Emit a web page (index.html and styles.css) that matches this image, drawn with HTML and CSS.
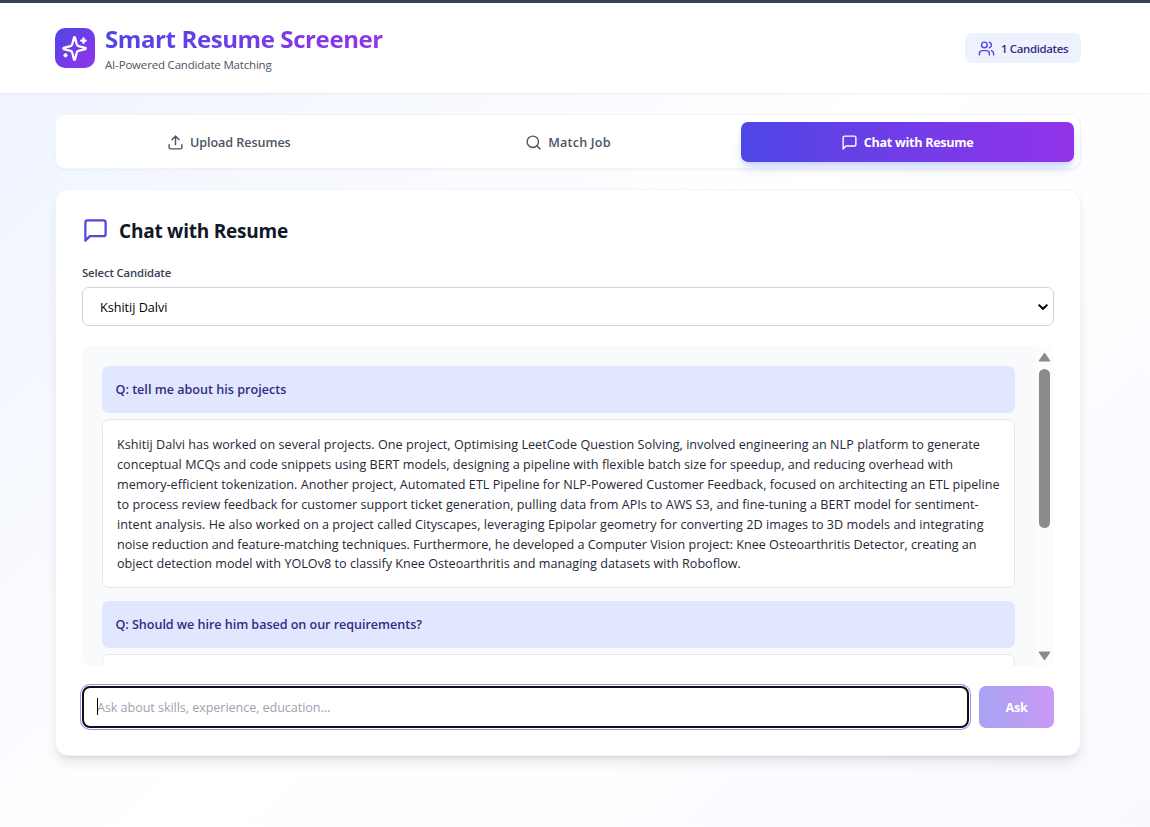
FILE: index.html
```html
<!DOCTYPE html>
<html lang="en">
<head>
<meta charset="utf-8">
<title>Smart Resume Screener</title>
<link rel="stylesheet" href="styles.css">
</head>
<body>
<header class="header">
  <div class="brand">
    <div class="logo">
      <svg class="icon" width="27" height="27" viewBox="0 0 24 24"><path d="M9.937 15.5A2 2 0 0 0 8.5 14.063l-6.135-1.582a.5.5 0 0 1 0-.962L8.5 9.936A2 2 0 0 0 9.937 8.5l1.582-6.135a.5.5 0 0 1 .963 0L14.063 8.5A2 2 0 0 0 15.5 9.937l6.135 1.581a.5.5 0 0 1 0 .964L15.5 14.063a2 2 0 0 0-1.437 1.437l-1.582 6.135a.5.5 0 0 1-.963 0z"/><path d="M20 3v4M22 5h-4M4 17v2M5 18H3"/></svg>
    </div>
    <div class="brand-text">
      <h1 class="title"><span class="title-fill">Smart Resume Screener</span></h1>
      <p class="subtitle">AI-Powered Candidate Matching</p>
    </div>
  </div>
  <div class="count">
    <svg class="icon count-icon" width="17" height="17" viewBox="0 0 24 24"><path d="M16 21v-2a4 4 0 0 0-4-4H6a4 4 0 0 0-4 4v2"/><circle cx="9" cy="7" r="4"/><path d="M22 21v-2a4 4 0 0 0-3-3.87M16 3.13a4 4 0 0 1 0 7.75"/></svg>
    <span class="count-text">1 Candidates</span>
  </div>
</header>
<main class="main">
  <nav class="tabs">
    <button class="tab"><svg class="icon" width="17" height="17" viewBox="0 0 24 24"><path d="M21 15v4a2 2 0 0 1-2 2H5a2 2 0 0 1-2-2v-4M17 8l-5-5-5 5M12 3v12"/></svg><span class="tab-upload">Upload Resumes</span></button>
    <button class="tab"><svg class="icon" width="17" height="17" viewBox="0 0 24 24"><circle cx="11" cy="11" r="8"/><path d="m21 21-4.3-4.3"/></svg><span class="tab-match">Match Job</span></button>
    <button class="tab tab-active"><svg class="icon" width="17" height="17" viewBox="0 0 24 24"><path d="M21 15a2 2 0 0 1-2 2H7l-4 4V5a2 2 0 0 1 2-2h14a2 2 0 0 1 2 2z"/></svg><span class="tab-chat">Chat with Resume</span></button>
  </nav>
  <section class="card">
    <h2 class="heading"><svg class="icon heading-icon" width="27" height="27" viewBox="0 0 24 24"><path d="M21 15a2 2 0 0 1-2 2H7l-4 4V5a2 2 0 0 1 2-2h14a2 2 0 0 1 2 2z"/></svg><span class="heading-text">Chat with Resume</span></h2>
    <div class="label"><span class="label-text">Select Candidate</span></div>
    <div class="select"><span class="select-text">Kshitij Dalvi</span><svg class="chevron" width="12" height="8" viewBox="0 0 12 8"><path d="M1.6 1.6 6 5.8l4.4-4.2"/></svg></div>
    <div class="chat">
      <div class="messages">
        <div class="question"><span class="q1">Q: tell me about his projects</span></div>
        <div class="answer">
          <span class="line l1">Kshitij Dalvi has worked on several projects. One project, Optimising LeetCode Question Solving, involved engineering an NLP platform to generate</span>
          <span class="line l2">conceptual MCQs and code snippets using BERT models, designing a pipeline with flexible batch size for speedup, and reducing overhead with</span>
          <span class="line l3">memory-efficient tokenization. Another project, Automated ETL Pipeline for NLP-Powered Customer Feedback, focused on architecting an ETL pipeline</span>
          <span class="line l4">to process review feedback for customer support ticket generation, pulling data from APIs to AWS S3, and fine-tuning a BERT model for sentiment-</span>
          <span class="line l5">intent analysis. He also worked on a project called Cityscapes, leveraging Epipolar geometry for converting 2D images to 3D models and integrating</span>
          <span class="line l6">noise reduction and feature-matching techniques. Furthermore, he developed a Computer Vision project: Knee Osteoarthritis Detector, creating an</span>
          <span class="line l7">object detection model with YOLOv8 to classify Knee Osteoarthritis and managing datasets with Roboflow.</span>
        </div>
        <div class="question question-next"><span class="q2">Q: Should we hire him based on our requirements?</span></div>
        <div class="answer"></div>
      </div>
      <div class="scrollbar">
        <svg width="13" height="10" viewBox="0 0 13 10"><path d="M6.5 1 12 9H1z"/></svg>
        <div class="thumb"></div>
        <svg width="13" height="10" viewBox="0 0 13 10"><path d="M1 1h11L6.5 9z"/></svg>
      </div>
    </div>
    <div class="ask-row">
      <div class="field"><span class="caret"></span><span class="placeholder">Ask about skills, experience, education...</span></div>
      <button class="ask"><span class="ask-text">Ask</span></button>
    </div>
  </section>
</main>
</body>
</html>
```
FILE: styles.css
```css
* { box-sizing: border-box; }
body {
  margin: 0;
  height: 827px;
  overflow: hidden;
  border-top: 3px solid #374151;
  font-family: "Open Sans", "Noto Sans", sans-serif;
  font-size: 12.6px;
  background: linear-gradient(135deg, #eef3ff 0%, #ffffff 50%, #fbf8ff 100%);
}
h1, h2, p { margin: 0; }
button { border: 0; background: none; font: inherit; padding: 0; }
span { white-space: nowrap; }
.icon { fill: none; stroke: currentColor; stroke-width: 2; stroke-linecap: round; stroke-linejoin: round; flex: none; }

.header {
  height: 90px;
  padding: 0 69px 0 55px;
  display: flex;
  align-items: center;
  justify-content: space-between;
  background: #fff;
  box-shadow: 0 1px 2px rgba(0, 0, 0, .07);
}
.brand { display: flex; align-items: center; gap: 10px; }
.logo {
  width: 40px; height: 40px;
  display: grid; place-items: center;
  padding-right: 1px;
  color: #fff;
  border-radius: 10px;
  background: linear-gradient(135deg, #4f46e5, #9333ea);
}
.title { font-size: 24px; line-height: 33px; font-weight: 700; letter-spacing: -.4px; }
.title-fill {
  display: inline-block;
  color: transparent;
  background: linear-gradient(90deg, #4f46e5, #9333ea);
  background-clip: text;
  -webkit-background-clip: text;
}
.subtitle { padding-top: 1px; font-size: 11.5px; line-height: 18px; color: #4b5563; letter-spacing: -.18px; }
.count {
  width: 116px; height: 30px;
  display: flex; align-items: center; gap: 6px;
  padding-left: 13px;
  border-radius: 7px;
  background: #eef2ff;
  color: #312e81;
  font-size: 11.4px; font-weight: 600;
  letter-spacing: -.33px;
}
.count-icon { color: #4f46e5; }

.main { padding: 21px 69px 0 55px; }
.tabs {
  height: 55px;
  display: grid;
  grid-template-columns: repeat(3, 1fr);
  gap: 7px;
  padding: 7px 6px 6px;
  border-radius: 10px;
  background: #fff;
  border: 1px solid #f3f4f6;
  box-shadow: 0 1px 2px rgba(0, 0, 0, .05);
}
.tab {
  display: flex; align-items: center; justify-content: center; gap: 6px;
  color: #4b5563;
  font-weight: 600;
  border-radius: 7px;
}
.tab:first-child { padding-left: 1px; }
.tab-upload { letter-spacing: -.07px; }
.tab-match { letter-spacing: .2px; }
.tab-active {
  color: #fff;
  background: linear-gradient(90deg, #4f46e5, #9333ea);
  box-shadow: 0 8px 12px -3px #c7d2fe, 0 3px 5px -3px #c7d2fe;
}
.tab-chat { font-weight: 700; letter-spacing: -.3px; }
.tab-active { padding-right: 1px; }

.card {
  height: 567px;
  margin-top: 20px;
  padding: 27px 26px 0;
  border-radius: 13px;
  background: #fff;
  border: 1px solid #f3f4f6;
  box-shadow: 0 8px 12px -2px rgba(0, 0, 0, .1), 0 3px 5px -3px rgba(0, 0, 0, .1);
}
.heading { display: flex; align-items: center; gap: 10px; height: 27px; font-size: 19px; color: #111827; font-weight: 700; letter-spacing: -.23px; }
.heading-icon { color: #4f46e5; }
.label { height: 17px; margin-top: 20px; line-height: 17px; font-size: 11.3px; font-weight: 600; letter-spacing: -.12px; color: #374151; }
.select {
  height: 39px;
  margin-top: 6px;
  padding: 0 4px 0 17px;
  display: flex; align-items: center; justify-content: space-between;
  border: 1px solid #d1d5db;
  border-radius: 7px;
  color: #000;
}
.select-text { padding-top: 2px; }
.chevron { fill: none; stroke: #000; stroke-width: 2; }

.chat {
  height: 320px;
  margin-top: 20px;
  display: flex;
  overflow: hidden;
  border-radius: 10px 0 0 10px;
  background: #f9fafb;
}
.messages { flex: 1; padding: 20px; }
.question {
  height: 47px;
  display: flex; align-items: center;
  padding-left: 13.5px;
  border-radius: 7px;
  background: #e0e7ff;
  color: #312e81;
  font-weight: 600;
}
.q2 { letter-spacing: -.05px; }
.answer {
  height: 169px;
  margin-top: 6px;
  padding: 15px 14px;
  border: 1px solid #e5e7eb;
  border-radius: 7px;
  background: #fff;
  color: #1f2937;
}
.question-next { margin-top: 13px; }
.line { display: block; line-height: 19.9px; }
.l1 { letter-spacing: .035px; }
.l2 { letter-spacing: .03px; }
.l3 { letter-spacing: .02px; }
.l4 { letter-spacing: .042px; }
.l5 { letter-spacing: .048px; }
.l6 { letter-spacing: -.007px; }
.l7 { letter-spacing: .02px; }
.scrollbar {
  width: 19px;
  display: flex; flex-direction: column; align-items: center;
  padding: 6px 0 5px;
  background: #fcfcfc;
}
.scrollbar svg { fill: #8b8b8b; stroke: #8b8b8b; stroke-linejoin: round; flex: none; }
.thumb { width: 11px; height: 159px; margin: 7px 0 auto; border-radius: 6px; background: #8b8b8b; }

.ask-row { display: flex; gap: 10px; margin-top: 20px; height: 42px; }
.field {
  width: 887px;
  position: relative;
  display: flex; align-items: center;
  padding-left: 13px;
  border: 2px solid #101010;
  border-radius: 8px;
  background: #fff;
  box-shadow: 0 0 0 1px #fff, 0 0 0 2px #8f94f3;
  color: #9ca3af;
}
.placeholder { letter-spacing: -.065px; }
.caret { position: absolute; left: 13px; top: 10px; width: 1px; height: 17px; background: #000; }
.ask {
  flex: 1;
  border-radius: 7px;
  color: #fff;
  font-weight: 700;
  letter-spacing: -.3px;
  background: linear-gradient(90deg, #a7a3f2, #c999f5);
}
```
